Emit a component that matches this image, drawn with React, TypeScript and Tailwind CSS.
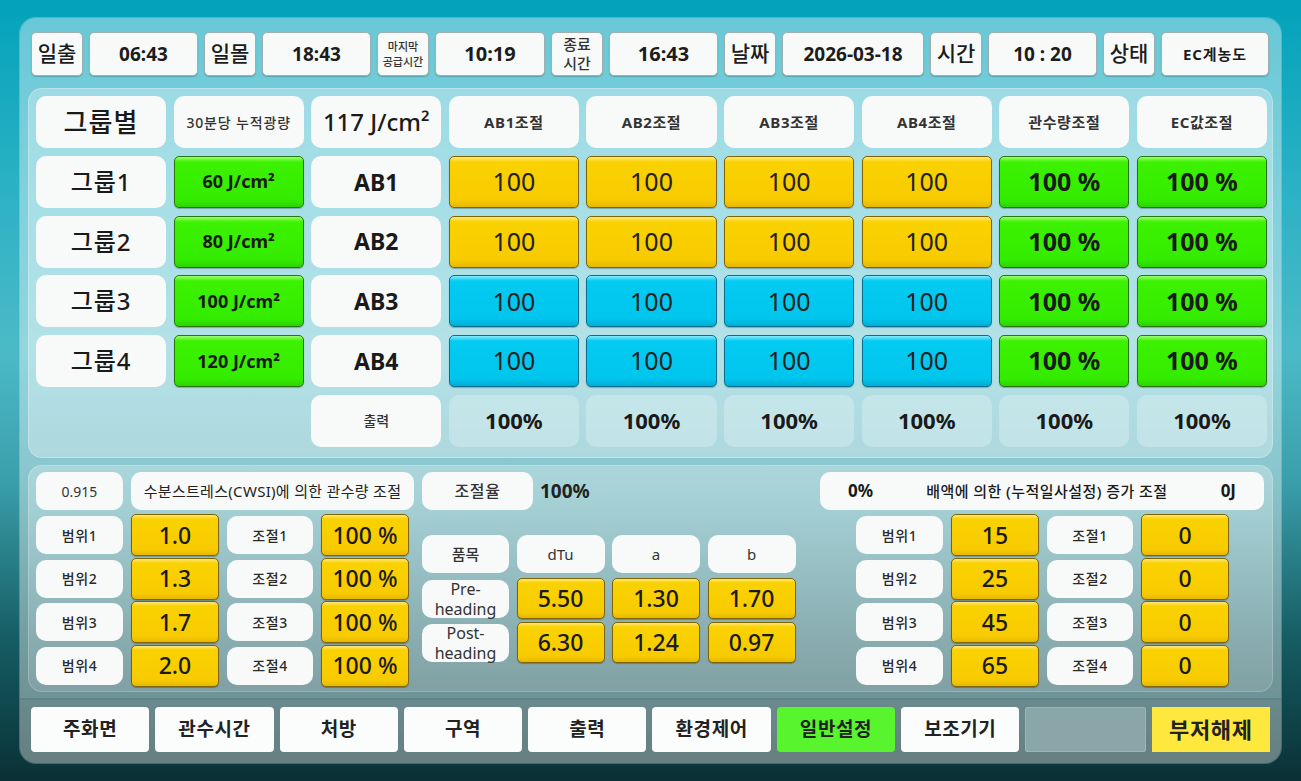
import React from "react";

const FONT = "font-['Noto_Sans','Noto_Sans_CJK_KR',sans-serif]";

const yellow =
  "rounded-[5px] border border-[#806400] bg-[linear-gradient(180deg,#ffe680_0%,#fad200_10%,#f8cb00_85%,#e6b800_100%)] shadow-[0_1px_1px_rgba(0,0,0,0.25)]";
const green =
  "rounded-[5px] border border-[#2a7410] bg-[linear-gradient(180deg,#9cff70_0%,#3cf200_10%,#34ec00_85%,#2cd400_100%)] shadow-[0_1px_1px_rgba(0,0,0,0.25)]";
const blue =
  "rounded-[5px] border border-[#0a6f8e] bg-[linear-gradient(180deg,#86ebff_0%,#04cbf2_10%,#00c5ed_85%,#00add6_100%)] shadow-[0_1px_1px_rgba(0,0,0,0.25)]";
const white = "rounded-[10px] bg-[#f8faf9]";

function TopCell({ w, children }: { w: string; children: React.ReactNode }) {
  return (
    <div
      className={`${w} h-[44px] shrink-0 rounded-[5px] border border-[#9fb0b0] bg-[#f7faf8] shadow-[0_1px_1px_rgba(0,0,0,0.2)] flex items-center justify-center text-center text-[#1c1c1c]`}
    >
      {children}
    </div>
  );
}

function Cell({
  kind,
  className = "",
  children,
}: {
  kind: "white" | "yellow" | "green" | "blue" | "out";
  className?: string;
  children?: React.ReactNode;
}) {
  const base =
    kind === "white"
      ? white
      : kind === "yellow"
      ? yellow
      : kind === "green"
      ? green
      : kind === "blue"
      ? blue
      : "rounded-[10px] bg-white/25";
  return (
    <div className={`${base} flex items-center justify-center text-center text-[#1a1a1a] ${className}`}>
      {children}
    </div>
  );
}

const groups = [
  { g: "그룹1", j: "60 J/cm²", ab: "AB1", c: "yellow" as const },
  { g: "그룹2", j: "80 J/cm²", ab: "AB2", c: "yellow" as const },
  { g: "그룹3", j: "100 J/cm²", ab: "AB3", c: "blue" as const },
  { g: "그룹4", j: "120 J/cm²", ab: "AB4", c: "blue" as const },
];

const heads = ["AB1조절", "AB2조절", "AB3조절", "AB4조절", "관수량조절", "EC값조절"];

const cwsi = [
  { r: "범위1", v: "1.0", a: "조절1", p: "100 %" },
  { r: "범위2", v: "1.3", a: "조절2", p: "100 %" },
  { r: "범위3", v: "1.7", a: "조절3", p: "100 %" },
  { r: "범위4", v: "2.0", a: "조절4", p: "100 %" },
];

const drain = [
  { r: "범위1", v: "15", a: "조절1", p: "0" },
  { r: "범위2", v: "25", a: "조절2", p: "0" },
  { r: "범위3", v: "45", a: "조절3", p: "0" },
  { r: "범위4", v: "65", a: "조절4", p: "0" },
];

const nav = ["주화면", "관수시간", "처방", "구역", "출력", "환경제어", "일반설정", "보조기기", "", "부저해제"];

function RangeGrid({ rows }: { rows: typeof cwsi }) {
  return (
    <div className="grid grid-cols-[87px_88px_86px_88px] gap-x-[8px] gap-y-[1.5px] auto-rows-[42px]">
      {rows.map((r) => (
        <React.Fragment key={r.r}>
          <Cell kind="white" className="h-[38px] self-center text-[14px] font-medium tracking-[0.04em] text-[#2a2a2a]">
            {r.r}
          </Cell>
          <Cell kind="yellow" className="text-[23px] font-medium whitespace-pre">
            {r.v}
          </Cell>
          <Cell kind="white" className="h-[38px] self-center text-[14px] font-medium tracking-[0.04em] text-[#2a2a2a]">
            {r.a}
          </Cell>
          <Cell kind="yellow" className="text-[23px] font-medium whitespace-pre">
            {r.p}
          </Cell>
        </React.Fragment>
      ))}
    </div>
  );
}

export default function App() {
  return (
    <div
      className={`${FONT} w-[1301px] h-[781px] overflow-hidden bg-[linear-gradient(180deg,#02a2ba_0%,#2db2c5_25%,#4bbac7_45%,#3a9ea9_62%,#155c63_82%,#0a3135_100%)] pt-[18px] px-[20px]`}
    >
      <div className="h-[745px] rounded-[16px] bg-white/40 shadow-[0_0_0_1px_rgba(255,255,255,0.25)] flex flex-col overflow-hidden">
        {/* status strip */}
        <div className="mt-[14px] ml-[11px] flex gap-[6px]">
          <TopCell w="w-[52px]">
            <span className="text-[21px] font-medium">일출</span>
          </TopCell>
          <TopCell w="w-[109px]">
            <span className="text-[19px] font-bold">06:43</span>
          </TopCell>
          <TopCell w="w-[52px]">
            <span className="text-[21px] font-medium">일몰</span>
          </TopCell>
          <TopCell w="w-[109px]">
            <span className="text-[19px] font-bold">18:43</span>
          </TopCell>
          <TopCell w="w-[52px]">
            <span className="text-[11px] leading-[15px] font-medium text-[#333]">
              마지막
              <br />
              공급시간
            </span>
          </TopCell>
          <TopCell w="w-[110px]">
            <span className="text-[20px] font-bold">10:19</span>
          </TopCell>
          <TopCell w="w-[52px]">
            <span className="flex flex-col text-[15px] leading-[19px] font-medium text-[#333]">
              <span>종료</span>
              <span>시간</span>
            </span>
          </TopCell>
          <TopCell w="w-[109px]">
            <span className="text-[20px] font-bold">16:43</span>
          </TopCell>
          <TopCell w="w-[52px]">
            <span className="text-[21px] font-medium">날짜</span>
          </TopCell>
          <TopCell w="w-[142px]">
            <span className="text-[19px] font-bold">2026-03-18</span>
          </TopCell>
          <TopCell w="w-[52px]">
            <span className="text-[21px] font-medium">시간</span>
          </TopCell>
          <TopCell w="w-[109px]">
            <span className="text-[19px] font-bold whitespace-pre">10 : 20</span>
          </TopCell>
          <TopCell w="w-[52px]">
            <span className="text-[21px] font-medium">상태</span>
          </TopCell>
          <TopCell w="w-[108px]">
            <span className="text-[15px] font-bold tracking-[0.06em]">EC계농도</span>
          </TopCell>
        </div>

        {/* group table */}
        <div className="mt-[12px] mx-[8px] h-[370px] rounded-[14px] bg-white/30 shadow-[inset_0_0_0_1px_rgba(255,255,255,0.25)] pt-[8px] pl-[8px] pr-[6px]">
          <div className="grid grid-cols-9 gap-x-[7.5px] gap-y-[7.8px] auto-rows-[52px]">
            <Cell kind="white" className="text-[26px] font-medium tracking-[0.04em]">
              그룹별
            </Cell>
            <Cell kind="white" className="text-[14px] font-medium tracking-[0.06em] text-[#333]">
              30분당 누적광량
            </Cell>
            <Cell kind="white" className="text-[24px] font-medium">
              117 J/cm²
            </Cell>
            {heads.map((h) => (
              <Cell key={h} kind="white" className="text-[15px] font-bold tracking-[0.04em] text-[#333]">
                {h}
              </Cell>
            ))}

            {groups.map((g) => (
              <React.Fragment key={g.g}>
                <Cell kind="white" className="text-[24px] font-medium tracking-[0.04em]">
                  {g.g}
                </Cell>
                <Cell kind="green" className="text-[18px] font-bold whitespace-pre">
                  {g.j}
                </Cell>
                <Cell kind="white" className="text-[23px] font-bold">
                  {g.ab}
                </Cell>
                {[0, 1, 2, 3].map((i) => (
                  <Cell key={i} kind={g.c} className="text-[25px] font-normal text-[#222]">
                    100
                  </Cell>
                ))}
                <Cell kind="green" className="text-[25px] font-bold whitespace-pre">
                  100 %
                </Cell>
                <Cell kind="green" className="text-[25px] font-bold whitespace-pre">
                  100 %
                </Cell>
              </React.Fragment>
            ))}

            <div />
            <div />
            <Cell kind="white" className="text-[14px] font-medium text-[#333]">
              출력
            </Cell>
            {[0, 1, 2, 3, 4, 5].map((i) => (
              <Cell key={i} kind="out" className="text-[22px] font-bold">
                100%
              </Cell>
            ))}
          </div>
        </div>

        {/* adjustment panel */}
        <div className="mt-[7px] mx-[8px] h-[227px] rounded-[14px] bg-[linear-gradient(180deg,rgba(255,255,255,0.28),rgba(255,255,255,0.12))] shadow-[inset_0_0_0_1px_rgba(255,255,255,0.2)] pt-[7px] pl-[8px] flex">
          {/* CWSI */}
          <div className="w-[378px] shrink-0">
            <div className="flex gap-[8px] h-[38px]">
              <Cell kind="white" className="w-[87px] text-[14px] text-[#333]">
                0.915
              </Cell>
              <Cell kind="white" className="flex-1 text-[15px] tracking-[0.02em] text-[#222]">
                수분스트레스(CWSI)에 의한 관수량 조절
              </Cell>
            </div>
            <div className="mt-[4px]">
              <RangeGrid rows={cwsi} />
            </div>
          </div>

          {/* crop coefficients */}
          <div className="ml-[8px] w-[373px] shrink-0">
            <div className="flex items-center h-[38px]">
              <Cell kind="white" className="w-[111px] h-[38px] text-[16px] font-medium tracking-[0.04em] text-[#333]">
                조절율
              </Cell>
              <span className="ml-[7px] text-[19px] font-bold text-[#222]">100%</span>
            </div>
            <div className="mt-[25px] grid grid-cols-[87px_88px_88px_88px] gap-x-[7.5px]">
              <Cell kind="white" className="h-[38px] text-[15px] font-medium text-[#333]">
                품목
              </Cell>
              <Cell kind="white" className="h-[38px] text-[15px] text-[#333]">
                dTu
              </Cell>
              <Cell kind="white" className="h-[38px] text-[15px] text-[#333]">
                a
              </Cell>
              <Cell kind="white" className="h-[38px] text-[15px] text-[#333]">
                b
              </Cell>
            </div>
            <div className="mt-[5px] grid grid-cols-[87px_88px_88px_88px] gap-x-[7.5px] gap-y-[3px] auto-rows-[41px]">
              <Cell kind="white" className="h-[38px] self-center text-[16px] leading-[20px] text-[#333]">
                Pre-
                <br />
                heading
              </Cell>
              <Cell kind="yellow" className="text-[23px] font-medium">5.50</Cell>
              <Cell kind="yellow" className="text-[23px] font-medium">1.30</Cell>
              <Cell kind="yellow" className="text-[23px] font-medium">1.70</Cell>
              <Cell kind="white" className="h-[38px] self-center text-[16px] leading-[20px] text-[#333]">
                Post-
                <br />
                heading
              </Cell>
              <Cell kind="yellow" className="text-[23px] font-medium">6.30</Cell>
              <Cell kind="yellow" className="text-[23px] font-medium">1.24</Cell>
              <Cell kind="yellow" className="text-[23px] font-medium">0.97</Cell>
            </div>
          </div>

          {/* drainage */}
          <div className="ml-[25px] w-[444px] shrink-0">
            <div className={`${white} h-[38px] flex items-center justify-between px-[28px] text-[#1a1a1a]`}>
              <span className="text-[17px] font-bold">0%</span>
              <span className="text-[15px] font-medium tracking-[0.03em]">배액에 의한 (누적일사설정) 증가 조절</span>
              <span className="text-[17px] font-bold">0J</span>
            </div>
            <div className="mt-[4px] ml-[36px]">
              <RangeGrid rows={drain} />
            </div>
          </div>
        </div>

        {/* navigation */}
        <div className="mt-[6px] flex-1 border-t-2 border-[#5d8589] bg-black/5 pt-[7px] px-[11px] flex gap-[6px]">
          {nav.map((n, i) => {
            const cls =
              n === "일반설정"
                ? "bg-[#58f52e] rounded-[4px]"
                : n === "부저해제"
                ? "bg-[#ffe83e] text-[22px]"
                : n === ""
                ? "bg-[#8aa6a9] border border-[#9cb6b8] rounded-[2px]"
                : "bg-[#fbfdfc] rounded-[4px]";
            return (
              <div
                key={i}
                className={`flex-1 h-[45px] flex items-center justify-center text-[19px] font-bold tracking-[0.03em] text-[#222] ${cls}`}
              >
                {n}
              </div>
            );
          })}
        </div>
      </div>
    </div>
  );
}
